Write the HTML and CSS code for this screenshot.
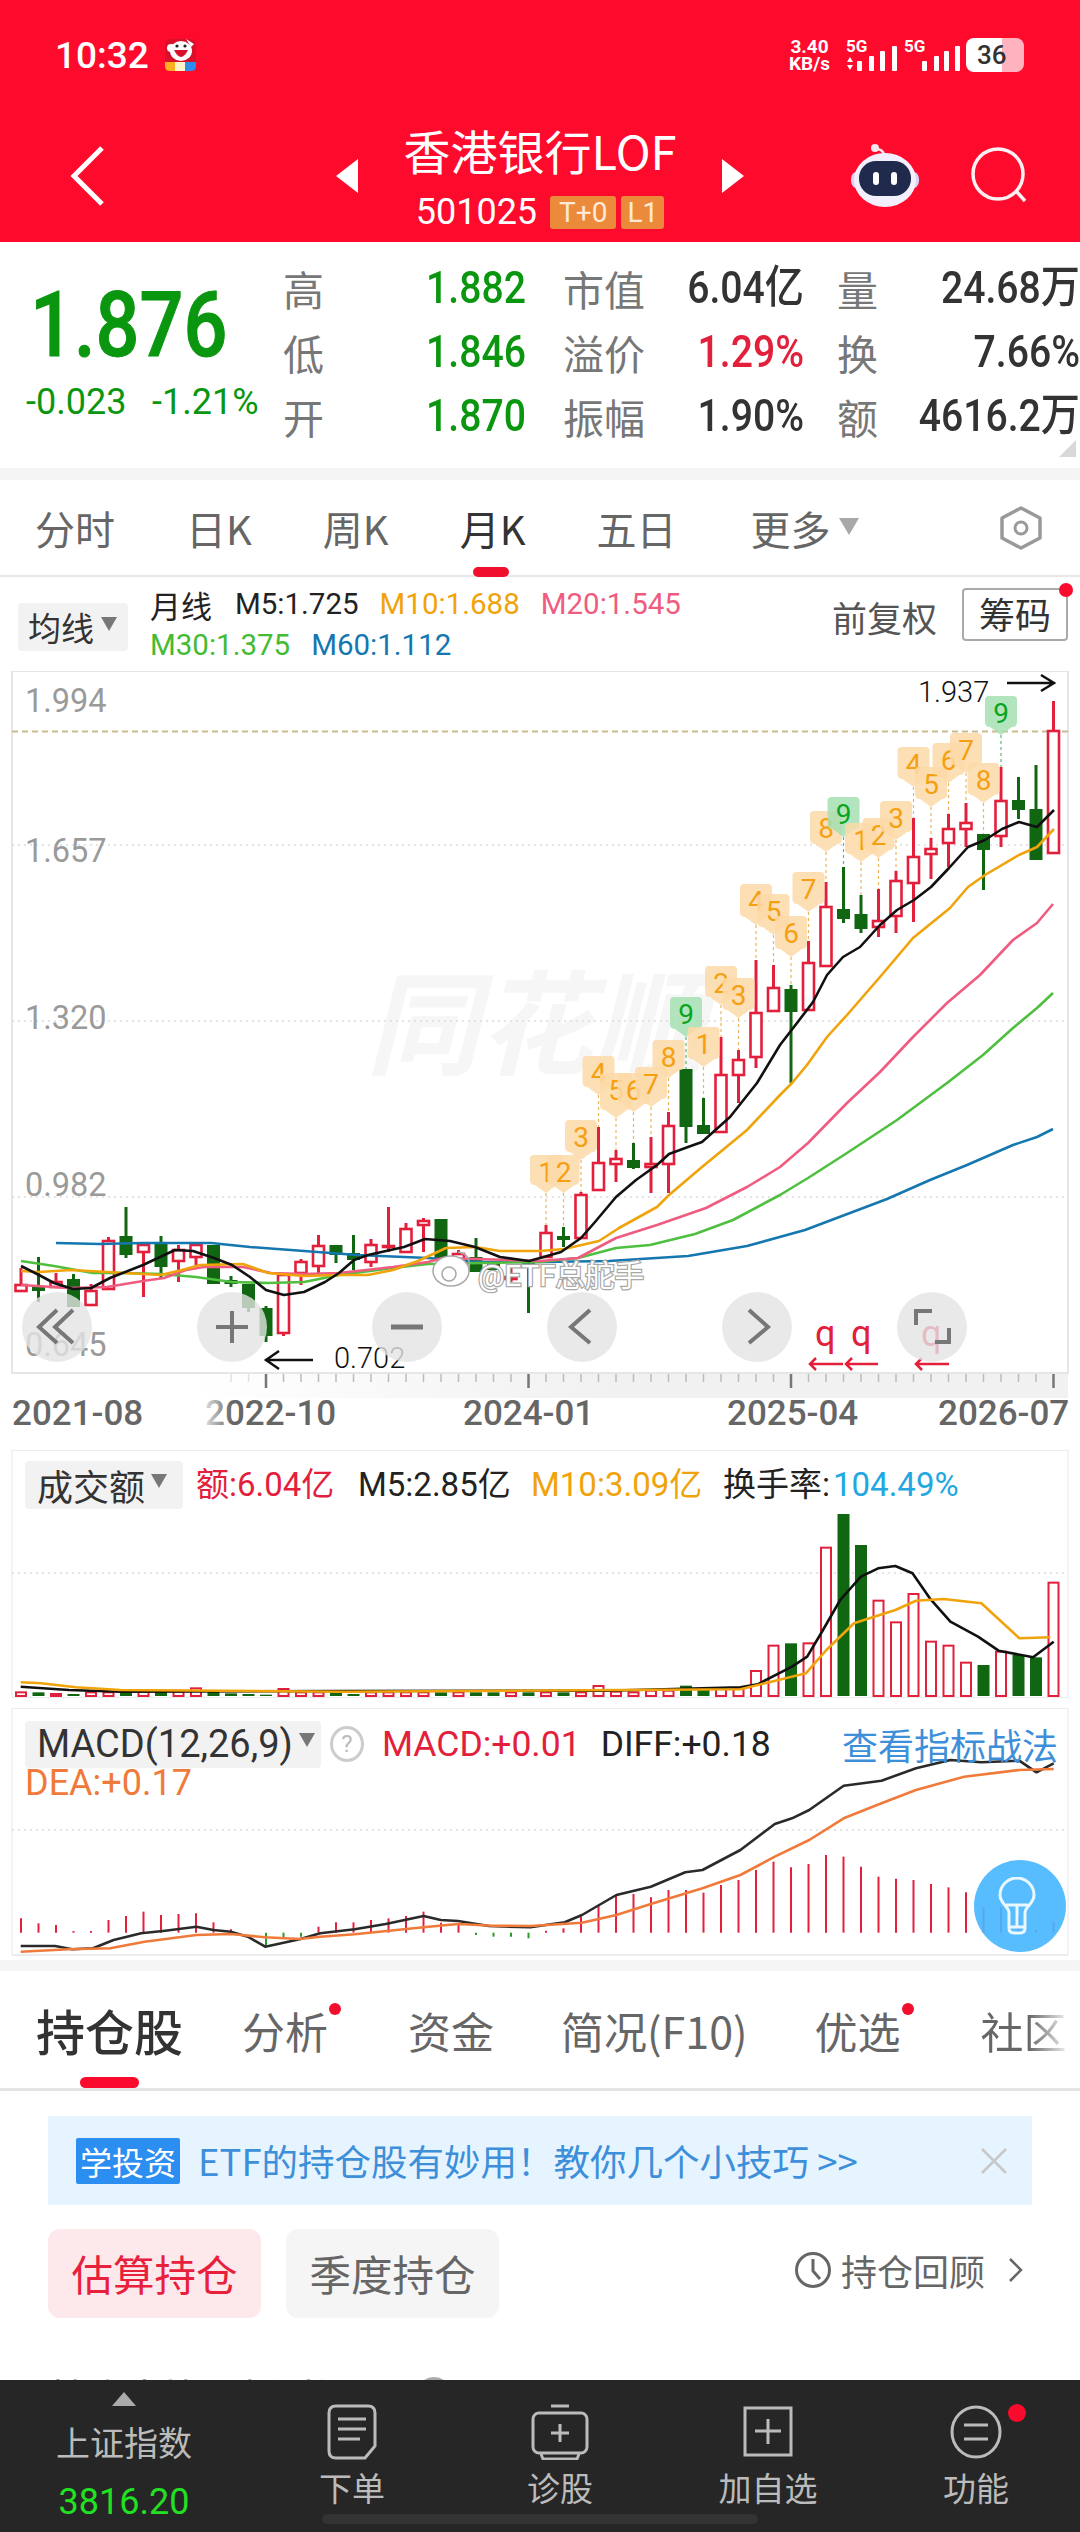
FILE: index.html
```html
<!DOCTYPE html>
<html lang="zh-CN">
<head>
    <meta charset="UTF-8">
    <title>香港银行LOF</title>
    <link rel="stylesheet" href="styles.css">
</head>
<body>
<div class="page">
    <main class="scroll">
        <header class="top">
            <div class="status">
                <div class="status-left">
                    <span class="clock">10:32</span>
                    <svg width="33" height="34" viewBox="0 0 33 34">
                        <rect x="1" y="1" width="31" height="32" rx="6" fill="#d8102a"/>
                        <path d="M22 1 L30 6 L27 9 Z" fill="#fff"/>
                        <ellipse cx="17" cy="13" rx="11" ry="10" fill="#fff"/>
                        <circle cx="7" cy="10" r="4" fill="#fff"/>
                        <circle cx="13" cy="8" r="1.6" fill="#222"/>
                        <circle cx="21" cy="8" r="1.6" fill="#222"/>
                        <path d="M10 12 Q17 26 24 12 Z" fill="#d8102a"/>
                        <path d="M1 24 H11 V33 H6 Q1 33 1 28 Z" fill="#ffb020"/>
                        <rect x="11" y="24" width="10" height="9" fill="#fff3c8"/>
                        <path d="M21 24 H32 V28 Q32 33 27 33 H21 Z" fill="#2b8ef0"/>
                    </svg>
                </div>
                <div class="status-right">
                    <div class="speed"><span>3.40</span><span>KB/s</span></div>
                    <svg width="52" height="34" viewBox="0 0 52 34">
                        <text x="0" y="14" class="sig-text">5G</text>
                        <path d="M4 19 L7 24 H1 Z M4 32 L7 27 H1 Z" fill="#fff"/>
                        <rect x="11" y="23" width="5" height="10" rx="1" fill="#fff"/>
                        <rect x="23" y="18" width="5" height="15" rx="1" fill="#fff"/>
                        <rect x="34" y="13" width="5" height="20" rx="1" fill="#fff"/>
                        <rect x="46" y="8" width="5" height="25" rx="1" fill="#fff"/>
                    </svg>
                    <svg width="56" height="34" viewBox="0 0 56 34">
                        <text x="0" y="14" class="sig-text">5G</text>
                        <rect x="18" y="23" width="5" height="10" rx="1" fill="#fff"/>
                        <rect x="30" y="18" width="5" height="15" rx="1" fill="#fff"/>
                        <rect x="40" y="13" width="5" height="20" rx="1" fill="#fff"/>
                        <rect x="51" y="8" width="5" height="25" rx="1" fill="#fff"/>
                    </svg>
                    <div class="battery">36</div>
                </div>
            </div>
            <nav class="nav">
                <div class="nav-left">
                    <svg width="36" height="60" viewBox="0 0 36 60"><path d="M32 2 L4 30 L32 58" fill="none" stroke="#fff" stroke-width="5"/></svg>
                </div>
                <div class="nav-center">
                    <span class="tri-left"></span>
                    <div class="title-block">
                        <div class="title">香港银行LOF</div>
                        <div class="code-row">
                            <span class="code">501025</span>
                            <span class="tag">T+0</span>
                            <span class="tag tag-l1">L1</span>
                        </div>
                    </div>
                    <span class="tri-right"></span>
                </div>
                <div class="nav-right">
                    <svg width="70" height="66" viewBox="0 0 70 66">
                        <circle cx="25" cy="5" r="4" fill="#f8e6ee"/>
                        <path d="M26 6 Q33 6 34 12" fill="none" stroke="#f8e6ee" stroke-width="2.5"/>
                        <rect x="1" y="28" width="68" height="18" rx="8" fill="#d9d2f2"/>
                        <ellipse cx="35" cy="37" rx="31" ry="27" fill="#f3effc"/>
                        <rect x="9" y="18" width="52" height="35" rx="17" fill="#1f2a4d"/>
                        <rect x="23" y="29" width="6" height="13" rx="3" fill="#fff"/>
                        <rect x="41" y="29" width="6" height="13" rx="3" fill="#fff"/>
                    </svg>
                    <svg width="58" height="58" viewBox="0 0 58 58">
                        <circle cx="28" cy="27" r="25" fill="none" stroke="#fff0f2" stroke-width="3.5"/>
                        <path d="M46 44 L55 54" stroke="#fff0f2" stroke-width="3.5"/>
                    </svg>
                </div>
            </nav>
        </header>

        <section class="quote">
            <div class="price-box">
                <div class="price">1.876</div>
                <div class="change"><span>-0.023</span><span>-1.21%</span></div>
            </div>
            <div class="quote-grid">
                <span class="q-label">高</span><span class="q-val green">1.882</span>
                <span class="q-label">市值</span><span class="q-val">6.04亿</span>
                <span class="q-label">量</span><span class="q-val">24.68万</span>
                <span class="q-label">低</span><span class="q-val green">1.846</span>
                <span class="q-label">溢价</span><span class="q-val red">1.29%</span>
                <span class="q-label">换</span><span class="q-val">7.66%</span>
                <span class="q-label">开</span><span class="q-val green">1.870</span>
                <span class="q-label">振幅</span><span class="q-val">1.90%</span>
                <span class="q-label">额</span><span class="q-val">4616.2万</span>
            </div>
            <span class="corner"></span>
        </section>

        <section class="period-tabs">
            <span class="period">分时</span>
            <span class="period">日K</span>
            <span class="period">周K</span>
            <span class="period active">月K</span>
            <span class="period">五日</span>
            <span class="period period-more">更多<i class="caret caret-more"></i></span>
            <svg class="hex" width="46" height="44" viewBox="0 0 46 44">
                <path d="M23 2 L42 12 V32 L23 42 L4 32 V12 Z" fill="none" stroke="#999" stroke-width="3.5" stroke-linejoin="round"/>
                <circle cx="23" cy="22" r="6" fill="none" stroke="#999" stroke-width="3"/>
            </svg>
        </section>

        <section class="ma-row">
            <div class="select select-ma">均线<i class="caret"></i></div>
            <div class="ma-values">
                <div class="ma-line">
                    <span class="ma-name">月线</span>
                    <span class="c-dark">M5:1.725</span>
                    <span class="c-m10">M10:1.688</span>
                    <span class="c-m20">M20:1.545</span>
                </div>
                <div class="ma-line">
                    <span class="c-m30">M30:1.375</span>
                    <span class="c-m60">M60:1.112</span>
                </div>
            </div>
            <span class="adjust">前复权</span>
            <span class="chip-btn">筹码</span>
        </section>

        <section class="kline">
            <svg id="kline" class="kline-svg" width="1080" height="779" viewBox="0 671 1080 779">
                <defs>
                    <linearGradient id="axisBand" x1="0" x2="1" y1="0" y2="0">
                        <stop offset="0" stop-color="#fff"/>
                        <stop offset="1" stop-color="#f1f1f1"/>
                    </linearGradient>
                    <linearGradient id="axisFade" x1="0" x2="1" y1="0" y2="0">
                        <stop offset="0" stop-color="#fff"/>
                        <stop offset="1" stop-color="#fff" stop-opacity="0"/>
                    </linearGradient>
                </defs>
                <text x="366" y="1066" class="watermark">同花顺</text>
                <rect x="12" y="671" width="1056" height="702" fill="none" stroke="#e6e6e6" stroke-width="2"/>
                <rect x="190" y="1374" width="420" height="24" fill="url(#axisBand)"/>
                <rect x="610" y="1374" width="458" height="24" fill="#f1f1f1"/>
                <path d="M12 845 H1068 M12 1021 H1068 M12 1197 H1068" stroke="#ddd" stroke-width="1.5" stroke-dasharray="2 4"/>
                <path d="M12 731.5 H1068" stroke="#c9bc8e" stroke-width="2" stroke-dasharray="6 4"/>
                <text x="25" y="712" class="y-label">1.994</text>
                <text x="25" y="862" class="y-label">1.657</text>
                <text x="25" y="1029" class="y-label">1.320</text>
                <text x="25" y="1196" class="y-label">0.982</text>
                <text x="25" y="1356" class="y-label">0.645</text>
                <g id="klineData"></g>
                <g class="note-text">
                    <text x="918" y="702">1.937</text>
                    <text x="334" y="1368">0.702</text>
                </g>
                <path d="M1007 683 H1054 M1041 675 L1054 683 L1041 691" fill="none" stroke="#111" stroke-width="2.5"/>
                <path d="M313 1360 H266 M279 1351 L266 1360 L279 1369" fill="none" stroke="#111" stroke-width="2.5"/>
                <g class="q-mark">
                    <text x="815" y="1346">q</text>
                    <text x="851" y="1346">q</text>
                    <text x="921" y="1346">q</text>
                </g>
                <path d="M810 1364 H843 M816 1358 L810 1364 L816 1370 M846 1364 H878 M852 1358 L846 1364 L852 1370 M916 1364 H949 M922 1358 L916 1364 L922 1370" fill="none" stroke="#e3203c" stroke-width="2.5"/>
                <g class="weibo">
                    <ellipse cx="451" cy="1271" rx="18" ry="15"/>
                    <circle cx="449" cy="1274" r="7"/>
                    <path d="M458 1252 Q471 1254 469 1268" fill="none"/>
                    <text x="478" y="1286">@ETF总舵手</text>
                </g>
                <g id="xTicks"></g>
                <g class="x-label">
                    <text x="12" y="1425">2021-08</text>
                    <text x="205" y="1425">2022-10</text>
                    <text x="463" y="1425">2024-01</text>
                    <text x="727" y="1425">2025-04</text>
                    <text x="938" y="1425">2026-07</text>
                </g>
                <rect x="198" y="1398" width="34" height="42" fill="url(#axisFade)"/>
            </svg>
            <div class="chart-btns">
                <span class="chart-btn"><svg viewBox="0 0 70 70"><path d="M35 18 L17 35 L35 51 M51 18 L33 35 L51 51"/></svg></span>
                <span class="chart-btn"><svg viewBox="0 0 70 70"><path d="M35 19 V51 M19 35 H51"/></svg></span>
                <span class="chart-btn"><svg viewBox="0 0 70 70"><path d="M19 35 H51" class="thick"/></svg></span>
                <span class="chart-btn"><svg viewBox="0 0 70 70"><path d="M43 18 L24 35 L43 51"/></svg></span>
                <span class="chart-btn"><svg viewBox="0 0 70 70"><path d="M27 18 L46 35 L27 51"/></svg></span>
                <span class="chart-btn"><svg viewBox="0 0 70 70"><path d="M19 33 V19 H35 M38 50 H52 V36"/></svg></span>
            </div>
        </section>

        <section class="panel panel-vol">
            <svg id="volume" class="panel-svg" width="1080" height="248" viewBox="0 1450 1080 248"></svg>
            <div class="panel-head">
                <div class="select select-vol">成交额<i class="caret"></i></div>
                <span class="red vol-amt">额:6.04亿</span>
                <span class="c-dark vol-m5">M5:2.85亿</span>
                <span class="c-m10 vol-m10">M10:3.09亿</span>
                <span class="c-dark turn">换手率:<b>104.49%</b></span>
            </div>
        </section>

        <section class="panel panel-macd">
            <svg id="macd" class="panel-svg" width="1080" height="252" viewBox="0 1708 1080 252"></svg>
            <div class="panel-stack">
                <div class="panel-head">
                    <div class="select select-macd">MACD(12,26,9)<i class="caret"></i></div>
                    <span class="help">?</span>
                    <span class="red">MACD:+0.01</span>
                    <span class="c-dark diff">DIFF:+0.18</span>
                    <span class="tactic">查看指标战法</span>
                </div>
                <div class="dea">DEA:+0.17</div>
            </div>
            <div class="bulb">
                <svg width="38" height="58" viewBox="0 0 38 58">
                    <path d="M11 36 C11 29 2 27 2 18 A17 17 0 0 1 36 18 C36 27 27 29 27 36 V51 Q27 56 22 56 H16 Q11 56 11 51 Z" fill="none" stroke="#eaf7ff" stroke-width="3"/>
                    <path d="M8 28 H30 M19 28 V50 M11 50 H27" fill="none" stroke="#eaf7ff" stroke-width="3"/>
                </svg>
            </div>
        </section>

        <section class="detail">
            <div class="detail-tabs">
                <span class="d-tab active">持仓股</span>
                <span class="d-tab dot">分析</span>
                <span class="d-tab d-tab-near">资金</span>
                <span class="d-tab d-tab-near">简况(F10)</span>
                <span class="d-tab dot">优选</span>
                <span class="d-tab fade">社区</span>
            </div>
            <div class="banner">
                <span class="banner-tag">学投资</span>
                <span class="banner-text">ETF的持仓股有妙用！教你几个小技巧 &gt;&gt;</span>
                <svg class="banner-close" width="28" height="28" viewBox="0 0 28 28"><path d="M2 2 L26 26 M26 2 L2 26" stroke="#c8c8c8" stroke-width="2.5"/></svg>
            </div>
            <div class="hold-row">
                <span class="pill pill-on">估算持仓</span>
                <span class="pill">季度持仓</span>
                <div class="review">
                    <svg width="38" height="38" viewBox="0 0 38 38">
                        <circle cx="19" cy="19" r="16.5" fill="none" stroke="#666" stroke-width="3"/>
                        <path d="M19 8 V20 L26 28" fill="none" stroke="#666" stroke-width="3"/>
                    </svg>
                    <span>持仓回顾</span>
                    <svg class="review-arrow" width="16" height="26" viewBox="0 0 16 26"><path d="M2 2 L13 13 L2 24" fill="none" stroke="#666" stroke-width="2.5"/></svg>
                </div>
            </div>
            <div class="update-row">持仓占比更新时间<span class="update-help"></span></div>
        </section>
    </main>

    <footer class="dock">
        <div class="index-box">
            <span class="index-up"></span>
            <span class="index-name">上证指数</span>
            <span class="index-val">3816.20</span>
        </div>
        <div class="dock-item">
            <svg width="50" height="56" viewBox="0 0 50 56">
                <path d="M9 2 H41 Q48 2 48 9 V42 L38 54 H9 Q2 54 2 47 V9 Q2 2 9 2 Z M11 15 H39 M11 25 H39 M11 35 H33" fill="none" stroke="#bbb" stroke-width="3"/>
            </svg>
            <span>下单</span>
        </div>
        <div class="dock-item">
            <svg width="58" height="56" viewBox="0 0 58 56">
                <path d="M20 2 H38" stroke="#bbb" stroke-width="3"/>
                <rect x="2" y="9" width="54" height="40" rx="6" fill="none" stroke="#bbb" stroke-width="3"/>
                <path d="M29 20 V38 M20 29 H38 M10 50 L12 55 H46 L48 50" fill="none" stroke="#bbb" stroke-width="3"/>
            </svg>
            <span>诊股</span>
        </div>
        <div class="dock-item">
            <svg width="50" height="56" viewBox="0 0 50 56">
                <rect x="2" y="4" width="46" height="47" fill="none" stroke="#bbb" stroke-width="3"/>
                <path d="M25 15 V40 M12 27 H38" stroke="#bbb" stroke-width="3"/>
            </svg>
            <span>加自选</span>
        </div>
        <div class="dock-item">
            <svg width="52" height="56" viewBox="0 0 52 56">
                <ellipse cx="26" cy="28" rx="24" ry="25" fill="none" stroke="#bbb" stroke-width="3"/>
                <path d="M14 21 H38 M14 35 H38" stroke="#bbb" stroke-width="3"/>
            </svg>
            <span>功能</span>
            <i class="dock-dot"></i>
        </div>
        <div class="home-bar"></div>
    </footer>
</div>
<script src="chart.js"></script>
</body>
</html>
```

FILE: styles.css
```css
* {
    box-sizing: border-box;
}
html, body {
    margin: 0;
    padding: 0;
}
body {
    font-family: Roboto, "Noto Sans CJK SC", sans-serif;
    background: #fff;
    color: #333;
}
.page {
    width: 1080px;
    height: 2532px;
    display: flex;
    flex-direction: column;
    overflow: hidden;
    position: relative;
}
.scroll {
    height: 2380px;
    overflow: hidden;
    flex: none;
}
svg {
    display: block;
}

.green { color: #0a960f; }
.red { color: #e3203c; }
.c-dark { color: #222; }
.c-m10 { color: #f0a30a; }
.c-m20 { color: #ef5c80; }
.c-m30 { color: #44bb33; }
.c-m60 { color: #1577b0; }

/* red header */
.top {
    height: 242px;
    background: #fe0a2c;
    color: #fff;
}
.status {
    height: 110px;
    padding: 0 56px 0 55px;
    display: flex;
    justify-content: space-between;
    align-items: center;
}
.status-left {
    display: flex;
    align-items: center;
    gap: 15px;
}
.clock {
    font-size: 37px;
    font-weight: 500;
}
.status-right {
    display: flex;
    align-items: center;
    gap: 6px;
}
.status-right svg {
    overflow: visible;
}
.speed {
    display: flex;
    flex-direction: column;
    align-items: center;
    font-size: 19px;
    font-weight: 700;
    line-height: 17px;
    margin-right: 10px;
}
.sig-text {
    font-size: 17px;
    font-weight: 700;
    fill: #fff;
}
.battery {
    width: 58px;
    height: 34px;
    border-radius: 8px;
    background: linear-gradient(90deg, #fff 36px, #ffb3bf 36px);
    color: #333;
    font-size: 26px;
    font-weight: 500;
    line-height: 34px;
    padding-left: 11px;
}
.nav {
    height: 132px;
    display: grid;
    grid-template-columns: 1fr auto 1fr;
    align-items: center;
}
.nav-left {
    padding-left: 70px;
}
.nav-center {
    display: flex;
    align-items: center;
    gap: 46px;
}
.tri-left, .tri-right {
    width: 0;
    height: 0;
    border-top: 17px solid transparent;
    border-bottom: 17px solid transparent;
}
.tri-left { border-right: 22px solid #fff; }
.tri-right { border-left: 22px solid #fff; }
.title-block {
    display: flex;
    flex-direction: column;
    align-items: center;
}
.title {
    font-family: "Noto Sans CJK SC", sans-serif;
    font-size: 47px;
    line-height: 60px;
}
.code-row {
    display: flex;
    align-items: center;
    gap: 5px;
    margin-top: 12px;
}
.code {
    font-size: 36px;
    line-height: 40px;
    margin-right: 8px;
}
.tag {
    background: #ec8a3c;
    color: #ffe9d6;
    font-size: 28px;
    line-height: 33px;
    padding: 0 9px;
    border-radius: 3px;
}
.tag-l1 {
    padding: 0 6px;
}
.nav-right {
    display: flex;
    justify-content: flex-end;
    align-items: center;
    gap: 50px;
    padding-right: 52px;
}

/* quote block */
.quote {
    height: 238px;
    border-bottom: 12px solid #f5f5f5;
    display: flex;
    position: relative;
    overflow: hidden;
}
.price-box {
    width: 283px;
    padding-left: 26px;
}
.price {
    font-size: 91px;
    font-weight: 500;
    line-height: 94px;
    color: #0a960f;
    margin: 36px 0 0 4px;
    transform: scaleX(.85);
    transform-origin: left center;
    -webkit-text-stroke: 1px #0a960f;
}
.change {
    display: flex;
    color: #0a960f;
    font-size: 36px;
    line-height: 44px;
    margin-top: 8px;
}
.change span:first-child {
    width: 126px;
}
.quote-grid {
    display: grid;
    grid-template-columns: 40px 203px 119px 159px 74px 202px;
    grid-auto-rows: 64px;
    padding-top: 14px;
    align-items: center;
}
.q-label {
    font-family: "Noto Sans CJK SC", sans-serif;
    font-size: 41px;
    line-height: 48px;
    color: #777;
    text-align: right;
    white-space: nowrap;
}
.q-val {
    font-size: 45px;
    font-weight: 500;
    line-height: 48px;
    text-align: right;
    white-space: nowrap;
    transform: scaleX(.87);
    transform-origin: right center;
}
.corner {
    position: absolute;
    right: 4px;
    top: 198px;
    border-left: 17px solid transparent;
    border-bottom: 17px solid #d8d8d8;
}

/* period tabs */
.period-tabs {
    height: 97px;
    border-bottom: 2px solid #e8e8e8;
    display: flex;
    align-items: center;
    gap: 71px;
    padding: 0 36px 0 35px;
    position: relative;
    font-family: "Noto Sans CJK SC", sans-serif;
}
.period {
    font-size: 40px;
    color: #666;
    white-space: nowrap;
}
.period-more {
    margin-left: 3px;
}
.period.active {
    color: #333;
    position: relative;
}
.period.active::after {
    content: "";
    position: absolute;
    left: 13px;
    bottom: -20px;
    width: 36px;
    height: 10px;
    border-radius: 5px;
    background: #f0102e;
}
.hex {
    margin-left: auto;
}
.caret {
    display: inline-block;
    width: 0;
    height: 0;
    border-left: 8px solid transparent;
    border-right: 8px solid transparent;
    border-top: 14px solid #777;
    margin-left: 8px;
    vertical-align: 8px;
}
.caret-more {
    border-left-width: 10px;
    border-right-width: 10px;
    border-top: 17px solid #a8a8a8;
    vertical-align: 10px;
}

/* moving average legend */
.ma-row {
    height: 94px;
    display: flex;
    align-items: flex-start;
    padding-left: 18px;
    position: relative;
}
.select {
    background: #f2f2f2;
    border-radius: 4px;
    color: #333;
    white-space: nowrap;
    display: flex;
    align-items: center;
}
.select .caret {
    vertical-align: 0;
}
.select-ma {
    width: 110px;
    height: 48px;
    font-family: "Noto Sans CJK SC", sans-serif;
    font-size: 33px;
    margin-top: 26px;
    padding-left: 10px;
}
.select-ma .caret {
    margin-left: 7px;
    margin-top: -6px;
}
.ma-values {
    margin-left: 22px;
    padding-top: 7px;
}
.ma-line {
    display: flex;
    gap: 21px;
    font-size: 29.5px;
    line-height: 41px;
    white-space: nowrap;
}
.ma-name {
    font-family: "Noto Sans CJK SC", sans-serif;
    font-size: 31px;
    color: #222;
    margin-right: 2px;
}
.adjust {
    position: absolute;
    left: 832px;
    top: 15px;
    font-family: "Noto Sans CJK SC", sans-serif;
    font-size: 35px;
    line-height: 50px;
    color: #555;
}
.chip-btn {
    position: absolute;
    left: 962px;
    top: 11px;
    width: 106px;
    height: 53px;
    border: 2px solid #aaa;
    border-radius: 4px;
    font-family: "Noto Sans CJK SC", sans-serif;
    font-size: 36px;
    line-height: 47px;
    text-align: center;
    color: #333;
}
.chip-btn::after {
    content: "";
    position: absolute;
    right: -7px;
    top: -7px;
    width: 14px;
    height: 14px;
    border-radius: 50%;
    background: #fa0a2c;
}

/* k-line chart */
.kline {
    height: 779px;
    position: relative;
}
.watermark {
    font-family: "Noto Sans CJK SC", sans-serif;
    font-size: 113px;
    font-style: italic;
    font-weight: 700;
    fill: #f6f6f6;
}
.y-label {
    font-size: 32.5px;
    fill: #9a9a9a;
}
.note-text {
    font-size: 29px;
    font-weight: 300;
    fill: #111;
}
.q-mark {
    font-size: 36px;
    fill: #e3203c;
}
.weibo {
    stroke: #a8a8a8;
    fill: #fff;
    stroke-width: 1.5;
}
.weibo text {
    font-family: Roboto, "Noto Sans CJK SC", sans-serif;
    font-size: 29.5px;
    stroke-width: 2.5;
    paint-order: stroke;
}
.x-label {
    font-size: 35px;
    font-weight: 500;
    fill: #666;
}
.badge-num {
    font-size: 28px;
    text-anchor: middle;
}
.chart-btns {
    position: absolute;
    left: 22px;
    top: 621px;
    display: flex;
    gap: 105px;
}
.chart-btn {
    width: 70px;
    height: 70px;
    border-radius: 50%;
    background: rgba(228, 228, 228, .8);
}
.chart-btn path {
    fill: none;
    stroke: #777;
    stroke-width: 4;
}
.chart-btn path.thick {
    stroke-width: 5;
}

/* volume and macd panels */
.panel {
    position: relative;
    display: grid;
}
.panel > * {
    grid-area: 1 / 1;
}
.panel-vol {
    height: 248px;
}
.panel-macd {
    height: 252px;
    margin-top: 10px;
}
.panel-head {
    display: flex;
    align-items: center;
    gap: 20px;
    font-size: 35.5px;
    line-height: 48px;
    white-space: nowrap;
    padding-left: 25px;
    align-self: start;
    position: relative;
}
.panel-vol .panel-head {
    margin-top: 11px;
    gap: 0;
    font-size: 33px;
}
.vol-amt { width: 162px; margin-left: 13px; }
.vol-m5 { width: 173px; }
.vol-m10 { width: 192px; }
.panel-stack {
    padding-top: 12px;
    position: relative;
}
.select-vol {
    width: 158px;
    height: 48px;
    font-family: "Noto Sans CJK SC", sans-serif;
    font-size: 36px;
    padding-left: 12px;
}
.select-vol .caret, .select-macd .caret {
    margin-left: 6px;
    margin-top: -8px;
}
.turn b {
    font-weight: 400;
    color: #22a7e0;
    margin-left: 3px;
}
.select-macd {
    width: 296px;
    height: 47px;
    padding-left: 12px;
    font-size: 38px;
}
.help {
    width: 34px;
    height: 36px;
    border: 3px solid #ccc;
    border-radius: 50%;
    font-size: 24px;
    line-height: 30px;
    text-align: center;
    color: #bbb;
    margin-left: -11px;
    margin-right: -2px;
}
.tactic {
    font-family: "Noto Sans CJK SC", sans-serif;
    font-size: 36px;
    color: #3d8fd9;
    position: absolute;
    left: 842px;
}
.dea {
    font-size: 36px;
    line-height: 38px;
    color: #f07a3a;
    padding-left: 25px;
    margin-top: -4px;
}
.bulb {
    position: absolute;
    left: 974px;
    top: 152px;
    width: 92px;
    height: 92px;
    border-radius: 50%;
    background: rgba(70, 182, 255, .9);
    display: flex;
    align-items: center;
    justify-content: center;
    padding-right: 6px;
}

/* holdings section */
.detail {
    border-top: 11px solid #f5f5f5;
}
.detail-tabs {
    height: 120px;
    border-bottom: 3px solid #e4e4e4;
    display: flex;
    align-items: center;
    padding: 0 0 0 36px;
    position: relative;
    overflow: hidden;
    font-family: "Noto Sans CJK SC", Roboto, sans-serif;
}
.d-tab {
    font-size: 43px;
    color: #666;
    margin-right: 80px;
    white-space: nowrap;
    position: relative;
}
.d-tab-near {
    margin-right: 67px;
}
.d-tab.active {
    font-size: 49px;
    font-weight: 500;
    color: #333;
    margin-right: 59px;
}
.d-tab.active::after {
    content: "";
    position: absolute;
    left: 44px;
    bottom: -23px;
    width: 59px;
    height: 11px;
    border-radius: 6px;
    background: #fa0a2c;
}
.d-tab.dot::after {
    content: "";
    position: absolute;
    right: -13px;
    top: 4px;
    width: 12px;
    height: 12px;
    border-radius: 50%;
    background: #f0102e;
}
.d-tab.fade {
    background: linear-gradient(90deg, #666 55%, #eee);
    -webkit-background-clip: text;
    background-clip: text;
    color: transparent;
    margin-right: 0;
}
.banner {
    margin: 25px 48px 0;
    height: 89px;
    background: #e6f4ff;
    border-radius: 2px;
    display: flex;
    align-items: center;
    padding: 0 24px 0 28px;
    font-family: "Noto Sans CJK SC", sans-serif;
}
.banner-tag {
    background: #2b8ef0;
    color: #fff;
    border-radius: 2px;
    font-size: 32px;
    line-height: 46px;
    padding: 0 4px;
    white-space: nowrap;
}
.banner-text {
    font-size: 36.5px;
    color: #3d8fd9;
    margin-left: 18px;
    white-space: nowrap;
}
.banner-close {
    margin-left: auto;
}
.hold-row {
    display: flex;
    align-items: center;
    gap: 25px;
    padding: 24px 56px 0 48px;
    font-family: "Noto Sans CJK SC", sans-serif;
}
.pill {
    width: 213px;
    height: 89px;
    border-radius: 12px;
    background: #f5f5f5;
    color: #666;
    font-size: 41.5px;
    line-height: 89px;
    text-align: center;
}
.pill-on {
    background: #fde8ec;
    color: #e8203c;
}
.review {
    margin-left: auto;
    display: flex;
    align-items: center;
    gap: 9px;
    font-size: 36px;
    color: #666;
    margin-top: -8px;
}
.review-arrow {
    margin-left: 14px;
}
.update-row {
    margin: 52px 0 0 50px;
    font-family: "Noto Sans CJK SC", sans-serif;
    font-size: 38px;
    line-height: 50px;
    color: #999;
    display: flex;
    align-items: center;
}
.update-help {
    width: 36px;
    height: 36px;
    border: 3px solid #aaa;
    border-radius: 50%;
    margin-left: 62px;
}

/* bottom dock */
.dock {
    height: 152px;
    background: #262626;
    display: flex;
    position: relative;
    color: #bbb;
    font-family: "Noto Sans CJK SC", sans-serif;
}
.index-box {
    width: 248px;
    display: flex;
    flex-direction: column;
    align-items: center;
    padding-top: 12px;
}
.index-up {
    width: 0;
    height: 0;
    border-left: 12px solid transparent;
    border-right: 12px solid transparent;
    border-bottom: 14px solid #aaa;
}
.index-name {
    font-size: 34px;
    line-height: 44px;
    margin-top: 14px;
}
.index-val {
    font-family: Roboto, sans-serif;
    font-size: 36px;
    line-height: 48px;
    color: #22e022;
    margin-top: 14px;
}
.dock-item {
    width: 208px;
    display: flex;
    flex-direction: column;
    align-items: center;
    padding-top: 24px;
    font-size: 33px;
    line-height: 44px;
    position: relative;
}
.dock-item span {
    margin-top: 5px;
}
.dock-dot {
    position: absolute;
    left: 136px;
    top: 24px;
    width: 18px;
    height: 18px;
    border-radius: 50%;
    background: #fa0a2c;
}
.home-bar {
    position: absolute;
    left: 322px;
    top: 134px;
    width: 436px;
    height: 10px;
    border-radius: 5px;
    background: #333;
}
```

FILE: chart.js
```js
// monthly k-line, coordinates are page pixels
const X = i => 21 + 17.5 * i;
const RED = '#e3203c';
const GREEN = '#116611';

// dir, body top, body bottom, wick top, wick bottom
const candles = [
    ['r',1285,1291,1268,1291],['g',1287,1289,1257,1302],['r',1282,1287,1273,1287],['g',1279,1305,1274,1305],
    ['r',1291,1305,1284,1305],['r',1241,1289,1237,1289],['g',1236,1253,1207,1258],['r',1245,1252,1245,1297],
    ['g',1243,1265,1236,1278],['r',1250,1261,1245,1282],['r',1245,1257,1245,1265],['g',1245,1282,1245,1284],
    ['g',1280,1282,1276,1287],['g',1284,1306,1284,1312],['g',1308,1334,1306,1342],['r',1275,1333,1275,1336],
    ['r',1262,1273,1259,1285],['r',1246,1266,1235,1275],['g',1245,1253,1245,1263],['g',1253,1258,1235,1270],
    ['r',1245,1262,1239,1267],['r',1246,1247,1207,1252],['r',1229,1252,1223,1253],['r',1221,1225,1218,1252],
    ['g',1219,1257,1219,1257],['r',1254,1262,1250,1266],['g',1257,1270,1238,1270],['g',1263,1268,1263,1268],
    ['r',1277,1279,1267,1282],['g',1261,1263,1260,1313],['r',1233,1257,1225,1257],['g',1236,1238,1227,1247],
    ['r',1195,1238,1192,1238],['r',1163,1190,1127,1190],['r',1159,1164,1150,1182],['g',1160,1166,1143,1169],
    ['r',1164,1167,1137,1193],['r',1126,1164,1112,1193],['g',1069,1125,1069,1143],['g',1125,1132,1098,1133],
    ['r',1075,1132,1037,1132],['r',1060,1075,1050,1103],['r',1013,1057,960,1068],['r',988,1011,965,1012],
    ['g',989,1010,985,1083],['r',963,1010,941,1010],['r',907,966,882,967],['g',909,917,867,923],
    ['g',914,927,895,933],['r',921,927,889,937],['r',881,916,871,933],['r',857,883,818,922],
    ['r',849,854,838,879],['r',829,843,814,867],['r',823,829,803,847],['g',834,848,834,890],
    ['r',801,836,767,847],['g',800,808,777,819],['g',809,858,765,860],['r',731,853,701,854]
];

const maLines = [
    ['#1577b0', [[56,1243],[100,1244],[143,1243],[211,1243],[250,1247],[304,1251],[357,1255],[428,1258],[475,1262],[540,1262],[609,1261],[688,1256],[747,1246],[805,1230],[887,1199],[930,1180],[967,1165],[1013,1145],[1037,1137],[1053,1129]]],
    ['#4fbf3f', [[21,1261],[54,1266],[93,1273],[125,1273],[161,1274],[196,1277],[232,1282],[268,1283],[304,1282],[339,1275],[393,1268],[428,1264],[482,1263],[540,1262],[578,1258],[616,1248],[650,1245],[695,1234],[733,1220],[780,1195],[808,1178],[847,1153],[897,1120],[947,1083],[983,1055],[1013,1028],[1037,1008],[1053,993]]],
    ['#ef5c80', [[21,1285],[69,1288],[107,1287],[143,1281],[164,1278],[186,1270],[204,1267],[243,1267],[271,1273],[304,1274],[339,1273],[393,1267],[428,1262],[443,1258],[540,1261],[578,1258],[616,1238],[657,1225],[706,1208],[747,1187],[780,1167],[808,1143],[847,1103],[880,1072],[913,1037],[947,1003],[980,975],[1013,940],[1037,923],[1053,904]]],
    ['#f0a30a', [[21,1271],[39,1272],[71,1270],[107,1272],[161,1275],[182,1270],[200,1265],[243,1264],[268,1273],[304,1276],[339,1275],[368,1275],[393,1270],[418,1261],[446,1248],[475,1247],[500,1251],[540,1251],[564,1249],[599,1241],[619,1228],[657,1207],[669,1195],[702,1167],[747,1130],[780,1095],[792,1083],[807,1065],[827,1037],[847,1015],[880,977],[913,938],[950,908],[968,887],[985,875],[1019,855],[1037,847],[1054,829]]],
    ['#111', [[21,1266],[39,1275],[54,1283],[73,1289],[91,1288],[110,1278],[143,1265],[175,1250],[193,1251],[214,1258],[232,1265],[250,1277],[266,1290],[284,1295],[304,1292],[325,1282],[339,1273],[354,1260],[368,1255],[404,1247],[425,1239],[450,1241],[475,1247],[500,1257],[529,1261],[540,1258],[561,1252],[581,1238],[595,1222],[616,1197],[636,1180],[657,1165],[669,1154],[688,1147],[702,1142],[730,1117],[757,1083],[780,1045],[797,1023],[813,1002],[827,975],[843,957],[860,947],[880,925],[897,910],[914,900],[931,887],[949,868],[968,847],[985,840],[1002,829],[1019,822],[1037,827],[1054,810]]]
];

// candle index, number, top, tip
const badges = [
    [30,1,1155,1193],[31,2,1155,1193],[32,3,1120,1160],[33,4,1056,1095],[34,5,1073,1118],[35,6,1073,1112],
    [36,7,1067,1107],[37,8,1040,1078],[38,9,997,1037],[39,1,1027,1067],[40,2,966,1005],[41,3,978,1018],
    [42,4,884,925],[43,5,894,935],[44,6,916,957],[45,7,872,912],[46,8,811,852],[47,9,797,837],
    [48,1,823,862],[49,2,818,858],[50,3,801,840],[51,4,747,787],[52,5,767,807],[53,6,743,783],
    [54,7,733,773],[55,8,763,803],[56,9,696,735]
];

function polyline(points, color, width) {
    const p = points.map(pt => pt.join(',')).join(' ');
    return `<polyline points="${p}" fill="none" stroke="${color}" stroke-width="${width}" stroke-linejoin="round"/>`;
}

function drawKline() {
    let out = '';
    for (const [i, , , tip] of badges) {
        const c = candles[i];
        const color = i === 38 || i === 47 || i === 56 ? '#5cb87a' : '#e8b860';
        out += `<path d="M${X(i)} ${tip} V${c[3]}" stroke="${color}" stroke-width="1.2" stroke-dasharray="3 3"/>`;
    }
    candles.forEach((c, i) => {
        const x = X(i);
        const up = c[0] === 'r';
        const color = up ? RED : GREEN;
        out += `<path d="M${x} ${c[3]} V${c[4]}" stroke="${color}" stroke-width="3"/>`;
        if (up) {
            out += `<rect x="${x - 5.5}" y="${c[1]}" width="11" height="${c[2] - c[1]}" fill="#fff" stroke="${color}" stroke-width="2.6"/>`;
        } else {
            out += `<rect x="${x - 6.5}" y="${c[1]}" width="13" height="${c[2] - c[1] + 2}" fill="${color}"/>`;
        }
    });
    for (const [color, pts] of maLines) {
        out += polyline(pts, color, 2.6);
    }
    for (const [i, n, top, tip] of badges) {
        const x = X(i);
        const isNine = n === 9;
        const fill = isNine ? '#a4dfb2' : '#fdd9a8';
        const text = isNine ? '#0aa41e' : '#f5a011';
        const bot = tip - 8;
        out += `<path d="M${x - 12} ${top} H${x + 12} Q${x + 16} ${top} ${x + 16} ${top + 4} V${bot - 5} Q${x + 16} ${bot} ${x + 11} ${bot} L${x} ${tip} L${x - 11} ${bot} Q${x - 16} ${bot} ${x - 16} ${bot - 5} V${top + 4} Q${x - 16} ${top} ${x - 12} ${top} Z" fill="${fill}" fill-opacity=".85"/>`;
        out += `<text x="${x}" y="${top + 27}" class="badge-num" fill="${text}">${n}</text>`;
    }
    document.getElementById('klineData').innerHTML = out;

    let ticks = '';
    for (let i = 12; i < 60; i++) {
        const big = (i - 14) % 15 === 0;
        const op = i < 14 ? 0.4 : 1;
        ticks += `<path d="M${X(i)} 1374 V${big ? 1388 : 1382}" stroke="${big ? '#777' : '#bbb'}" stroke-width="${big ? 2.5 : 1.5}" opacity="${op}"/>`;
    }
    document.getElementById('xTicks').innerHTML = ticks;
}

// traced from a crop scaled 1.452x across and 3x down
const trace = (pts, top) => pts.map(([x, y]) => [+(x / 1.452).toFixed(1), +(top + y / 3).toFixed(1)]);

function drawVolume() {
    const tops = [757,757,762,762,757,757,755,755,755,755,745,752,760,762,764,747,757,757,757,762,757,757,757,757,757,757,757,757,757,757,757,757,757,738,755,757,752,752,737,750,745,745,693,617,610,610,323,222,315,482,547,462,605,617,668,675,635,645,652,428];
    const greens = new Set([1,3,6,8,11,12,13,14,18,19,24,26,27,29,31,38,39,44,47,48,55,57,58]);
    const base = 1696;
    let out = '<path d="M12 1450 H1068 M12 1698 H1068" stroke="#ececec" stroke-width="2"/>';
    out += '<path d="M12 1450 V1698 M1068 1450 V1698" stroke="#f0f0f0" stroke-width="1.5"/>';
    out += '<path d="M12 1573 H1068" stroke="#ddd" stroke-width="1.5" stroke-dasharray="2 4"/>';
    tops.forEach((t, i) => {
        const y = 1440 + t / 3;
        const x = X(i);
        if (greens.has(i)) {
            out += `<rect x="${x - 6}" y="${y}" width="12" height="${base - y}" fill="${GREEN}"/>`;
        } else {
            out += `<rect x="${x - 5}" y="${y}" width="10" height="${base - y}" fill="#fff" stroke="${RED}" stroke-width="2"/>`;
        }
    });
    const black = [[30,740],[100,750],[175,755],[500,753],[880,752],[1075,742],[1100,733],[1150,680],[1172,650],[1195,570],[1220,480],[1250,410],[1275,385],[1300,378],[1325,400],[1350,475],[1380,545],[1420,590],[1450,632],[1500,652],[1530,605]];
    const orange = [[30,727],[60,730],[110,742],[175,750],[500,755],[1075,748],[1120,725],[1170,700],[1200,630],[1240,550],[1300,510],[1330,482],[1370,477],[1425,490],[1480,595],[1525,592]];
    out += polyline(trace(black, 1440), '#111', 2.6);
    out += polyline(trace(orange, 1440), '#f0a30a', 2.6);
    document.getElementById('volume').innerHTML = out;
}

function drawMacd() {
    const tops = [1435,1450,1455,1473,1473,1440,1428,1415,1425,1422,1420,1447,1468,1478,1520,1495,1490,1460,1447,1447,1440,1435,1428,1415,1448,1450,1485,1490,1490,1495,1472,1465,1430,1398,1368,1362,1372,1350,1350,1358,1335,1320,1290,1265,1282,1272,1245,1250,1280,1310,1316,1320,1332,1342,1357,1402,1400,1430,1470,1445];
    const base = 1478;
    let out = '<path d="M12 1708 H1068 M12 1955 H1068" stroke="#ececec" stroke-width="2"/>';
    out += '<path d="M12 1708 V1955 M1068 1708 V1955" stroke="#f0f0f0" stroke-width="1.5"/>';
    out += '<path d="M12 1830 H1068" stroke="#ddd" stroke-width="1.5" stroke-dasharray="2 4"/>';
    tops.forEach((t, i) => {
        const color = t > base ? '#2a9a2a' : RED;
        out += `<path d="M${X(i)} ${1440 + t / 3} V${1440 + base / 3}" stroke="${color}" stroke-width="2"/>`;
    });
    const diff = [[30,1518],[80,1518],[105,1528],[135,1525],[165,1500],[205,1480],[240,1472],[285,1460],[310,1470],[335,1475],[360,1490],[385,1520],[435,1498],[465,1480],[515,1468],[560,1452],[615,1428],[640,1440],[665,1443],[710,1458],[770,1462],[820,1447],[845,1425],[895,1365],[945,1340],[995,1297],[1020,1290],[1075,1230],[1125,1152],[1150,1135],[1175,1110],[1225,1037],[1280,1022],[1330,985],[1380,960],[1425,967],[1480,962],[1505,997],[1530,970]];
    const dea = [[30,1535],[100,1528],[160,1525],[210,1505],[285,1485],[335,1482],[385,1492],[435,1497],[465,1490],[515,1483],[615,1462],[665,1452],[715,1457],[770,1458],[845,1448],[895,1425],[945,1392],[1020,1345],[1075,1305],[1125,1250],[1175,1200],[1225,1135],[1280,1090],[1330,1050],[1400,1010],[1480,990],[1530,987]];
    out += polyline(trace(diff, 1440), '#2a2a2a', 2.6);
    out += polyline(trace(dea, 1440), '#f07a3a', 2.6);
    document.getElementById('macd').innerHTML = out;
}

drawKline();
drawVolume();
drawMacd();
```
